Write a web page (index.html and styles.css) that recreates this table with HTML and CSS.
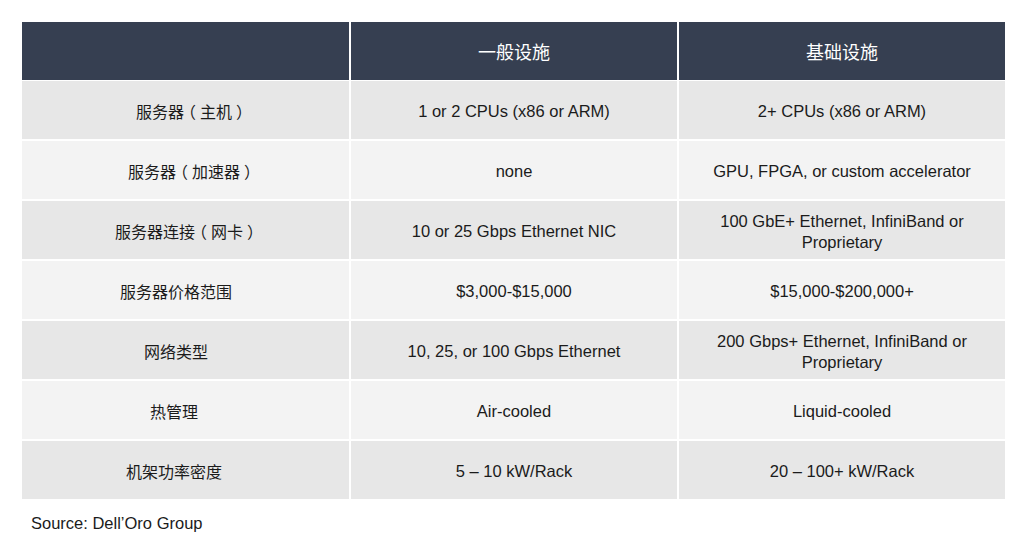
FILE: index.html
```html
<!DOCTYPE html>
<html lang="zh">
<head>
<meta charset="utf-8">
<title>一般设施 vs 基础设施</title>
<link rel="stylesheet" href="styles.css">
</head>
<body>
<div class="page">
  <div class="table">
    <div class="cell head"></div>
    <div class="cell head">一般设施</div>
    <div class="cell head">基础设施</div>

    <div class="cell label paren odd"><span>服务器<span class="pn">（</span>主机<span class="pn">）</span></span></div>
    <div class="cell odd">1 or 2 CPUs (x86 or ARM)</div>
    <div class="cell odd">2+ CPUs (x86 or ARM)</div>

    <div class="cell label paren even"><span>服务器<span class="pn">（</span>加速器<span class="pn">）</span></span></div>
    <div class="cell even">none</div>
    <div class="cell even">GPU, FPGA, or custom accelerator</div>

    <div class="cell label paren mid odd"><span>服务器连接<span class="pn">（</span>网卡<span class="pn">）</span></span></div>
    <div class="cell odd">10 or 25 Gbps Ethernet NIC</div>
    <div class="cell odd">100 GbE+ Ethernet, InfiniBand or Proprietary</div>

    <div class="cell label even">服务器价格范围</div>
    <div class="cell even">$3,000-$15,000</div>
    <div class="cell even">$15,000-$200,000+</div>

    <div class="cell label odd">网络类型</div>
    <div class="cell odd">10, 25, or 100 Gbps Ethernet</div>
    <div class="cell odd">200 Gbps+ Ethernet, InfiniBand or Proprietary</div>

    <div class="cell label left even">热管理</div>
    <div class="cell even">Air-cooled</div>
    <div class="cell even">Liquid-cooled</div>

    <div class="cell label left odd">机架功率密度</div>
    <div class="cell odd">5 – 10 kW/Rack</div>
    <div class="cell odd">20 – 100+ kW/Rack</div>
  </div>
  <p class="source">Source: Dell’Oro Group</p>
</div>
</body>
</html>
```

FILE: styles.css
```css
html, body {
  margin: 0;
  padding: 0;
  background: #ffffff;
}

body {
  font-family: "Liberation Sans", "Noto Sans CJK SC", Arial, sans-serif;
  color: #1b1b1b;
}

.page {
  padding: 22px 19px 0 22px;
}

.table {
  display: grid;
  grid-template-columns: 327px 326px 326px;
  grid-template-rows: 57px repeat(7, 59px);
  column-gap: 2px;
  row-gap: 1px;
  width: 983px;
}

.cell {
  display: flex;
  align-items: center;
  justify-content: center;
  text-align: center;
  padding: 3px 20px 0 20px;
  font-size: 16.5px;
  line-height: 21px;
}

.head {
  background: #363f51;
  color: #ffffff;
  font-family: "Noto Sans CJK SC", "Liberation Sans", sans-serif;
  font-size: 18px;
  padding-top: 1px;
  margin-bottom: 1px;
  height: 57px;
}

.odd {
  background: #e7e7e7;
}

.even {
  background: #f3f3f3;
}

.label {
  font-family: "Noto Sans CJK SC", "Liberation Sans", sans-serif;
  font-size: 16px;
  padding-left: 10px;
  padding-right: 29px;
}

.label.paren {
  padding-left: 22px;
  padding-right: 9px;
}

.label.paren.mid {
  padding-left: 22px;
  padding-right: 19px;
}

.label.left {
  padding-left: 6px;
  padding-right: 29px;
}

.pn {
  display: inline-block;
  width: 1em;
  text-align: center;
  font-feature-settings: "halt" 1;
}

.table > .cell:nth-child(n+4) {
  margin-top: 1px;
}

.source {
  margin: 14px 0 0 9px;
  font-size: 16.5px;
  line-height: 21px;
  color: #1b1b1b;
}
```
